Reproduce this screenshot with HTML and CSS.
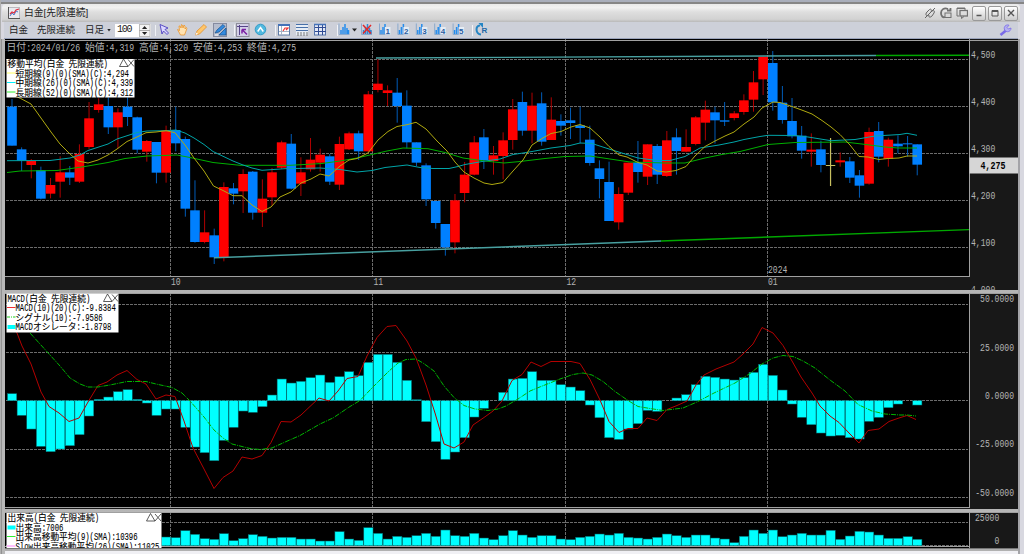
FILE: index.html
```html
<!DOCTYPE html>
<html lang="ja">
<head>
<meta charset="utf-8">
<title>白金[先限連続]</title>
<link rel="stylesheet" href="styles.css">
</head>
<body>
<div class="window">
  <header class="titlebar">
    <svg class="app-icon" width="12" height="12" viewBox="0 0 12 12"><rect x=".5" y=".5" width="11" height="11" fill="#e9e9ee" stroke="#b9b9bf"/><path d="M.5 0V11.5H12" stroke="#555" fill="none"/><path d="M2 9L4 6L6 8L8 4L10 5" stroke="#4b7fd0" fill="none"/><path d="M2 7L4 5L6 6L8 3L11 2" stroke="#e03040" fill="none" stroke-width="1.2"/></svg>
    <h1 class="title">白金[先限連続]</h1>
    <div class="window-tools">
      <svg width="12" height="12" viewBox="0 0 12 12" fill="none" stroke="#666"><path d="M1 11L11 1M4.5 8C2 10 1 7 3 5L5 3C7 1 8 3 7 5M5 8C4 10 6 11 8 9L10 6C11 4 10 3 8 4"/></svg>
      <svg width="12" height="12" viewBox="0 0 12 12" fill="none" stroke="#707070"><path d="M8 2C4 0 1 3 1 6C1 9 3 11 5 10M7 3.5H10.500V1" stroke-width="1.8"/><rect x="5" y="6" width="6" height="4.500"/></svg>
      <svg width="12" height="12" viewBox="0 0 12 12" fill="none" stroke="#707070"><path d="M3 9H1V1H9V3M1 1.500H9"/><rect x="4" y="3.500" width="7.500" height="5.500" stroke-width="1.300"/><path d="M5.500 9.500V11.500L8 9.500"/></svg>
    </div>
    <div class="window-buttons">
      <button class="win-btn"><svg width="12" height="12"><path d="M3.500 8.500H8.500" stroke="#555" stroke-width="1.500"/></svg></button>
      <button class="win-btn"><svg width="12" height="12"><path d="M3 3.500H9V9H3Z M3 4.500H9" stroke="#555" fill="none"/></svg></button>
      <button class="win-btn"><svg width="12" height="12"><path d="M3 3L9 9M9 3L3 9" stroke="#555" stroke-width="1.400"/></svg></button>
    </div>
  </header>
  <nav class="toolbar">
    <span class="label name">白金</span><span class="label series">先限連続</span><span class="label period">日足</span><i class="caret"></i>
    <span class="count"><b>100</b><svg width="12" height="13" viewBox="0 0 12 13"><rect x=".5" y=".5" width="10.500" height="12" fill="#f2f2f2" stroke="#bbb"/><path d="M0 6.500H11" stroke="#aaa"/><path d="M3 5L5.600 2L8.200 5ZM3 8L5.600 11L8.200 8Z" fill="#222"/></svg></span>
    <i class="divider"></i>
    <div class="tools" id="tools"></div>
    <svg class="wrench" width="13" height="13" viewBox="0 0 13 13"><path d="M1.500 11L7 6.500" stroke="#7a6be8" stroke-width="2.600"/><path d="M10 1.200A3.400 3.400 0 1 0 12 4L9.500 5L8 3.500Z" fill="#b5b0f2" stroke="#7a6be8" stroke-width=".8"/></svg>
  </nav>
  <main class="panels">
    <section class="panel price">
      <svg class="plot" id="price" width="1013" height="251" viewBox="5 39 1013 251"></svg>
    </section>
    <section class="panel macd">
      <svg class="plot" id="macd" width="1013" height="216" viewBox="5 293 1013 216"></svg>
    </section>
    <section class="panel volume">
      <svg class="plot" id="volume" width="1013" height="36" viewBox="5 512 1013 36"></svg>
    </section>
  </main>
</div>
<script src="chart.js"></script>
</body>
</html>
```
FILE: styles.css
```css
* { box-sizing: border-box; }
body {
  margin: 0;
  width: 1024px;
  height: 554px;
  overflow: hidden;
  background: #d8d8e0;
  font-family: "Liberation Sans", "Noto Sans CJK JP", sans-serif;
}
.window {
  display: flex;
  flex-direction: column;
  width: 1024px;
  height: 554px;
  padding-top: 2px;
  border-left: 1px solid #b0b0b0;
  background: linear-gradient(#a9aebb 0 2px, #868686 2px 4px, transparent 4px);
}
.titlebar {
  display: flex;
  align-items: center;
  flex: none;
  height: 18px;
  margin: 2px 4px 0 1px;
  padding: 0 2px 0 6px;
  border-radius: 4px 4px 0 0;
  background: linear-gradient(#e9e9e9, #f1f1f1 20%, #dedede 45%, #d2d2d2 85%, #b9b9b9);
}
.app-icon { flex: none; }
.title {
  margin: 0 0 0 4px;
  color: #222;
  font-size: 9.8px;
  font-weight: 400;
  line-height: 16px;
}
.window-tools { display: flex; gap: 4px; margin: 0 4px 0 auto; }
.window-buttons { display: flex; gap: 2px; }
.win-btn {
  width: 14px;
  height: 15px;
  padding: 0;
  border: 1px solid #999;
  border-radius: 2px;
  background: linear-gradient(#fff, #ccc);
}
.win-btn svg { display: block; }
.toolbar {
  display: flex;
  align-items: center;
  flex: none;
  height: 17px;
  margin: 0 6px 0 3px;
  padding-left: 5px;
  background: #cdd0d9;
  border-bottom: 1px solid #9aa3bb;
}
.label { color: #222; font-size: 9.5px; line-height: 16px; white-space: nowrap; }
.name { width: 28px; }
.series { width: 48px; }
.period { width: 22px; }
.caret {
  width: 4px;
  height: 3px;
  background: #222;
  clip-path: polygon(0 0, 100% 0, 50% 100%);
}
.count {
  display: flex;
  width: 36px;
  height: 13px;
  margin-left: 4px;
  background: #fff;
  color: #222;
}
.count b {
  width: 24px;
  padding-left: 2px;
  font: 10px/12px "Liberation Mono", monospace;
  letter-spacing: -1.2px;
}
.divider { width: 1px; height: 11px; margin-left: 4px; background: #eef0f5; }
.tools { height: 16px; }
.tools svg { display: block; }
.wrench { margin: 0 6px 0 auto; }
.panels {
  display: flex;
  flex: none;
  flex-direction: column;
  box-sizing: content-box;
  width: 1013px;
  height: 515px;
  padding-left: 4px;
  border-right: 2px solid #a4a4a8;
  background: linear-gradient(90deg, #929292 0 1px, #b8b8b8 1px 4px, #181818 4px);
}
.plot { display: block; }
.panel { flex: none; }
.price { height: 251px; }
.macd { height: 219px; }
.volume {
  height: 45px;
  background: linear-gradient(transparent 36px, #777 36px 37px, #b0b0b0 37px 39px, #f0f0f4 39px);
}
.macd, .volume {
  border: 0 solid;
  border-top-width: 3px;
  border-image: linear-gradient(#b4b4b4, #fff 50%, #aaa) 1;
}
.grid { stroke: #6c6c6c; stroke-dasharray: 3 1; shape-rendering: crispEdges; }
.axis-bg { fill: #181818; }
.frame { stroke: #a0a0a0; fill: none; shape-rendering: crispEdges; }
.up { fill: #f00; stroke: none; }
.down { fill: #0080ff; stroke: none; }
.wick-up { stroke: #b00000; }
.wick-down { stroke: #005cb8; }
.curve { fill: none; stroke-width: 1; stroke-linejoin: round; }
.short { stroke: #b0aa10; }
.mid { stroke: #00a5a8; }
.long { stroke: #00b000; }
.teal { stroke: #48a0a0; stroke-width: 1.4; }
.green { stroke: #00a800; stroke-width: 1.4; }
.macd-line { stroke: #b40000; }
.signal { stroke: #00b400; stroke-dasharray: 5 1 1 1; }
.bar { fill: #0ff; stroke: #006c70; stroke-width: .5; }
.mono {
  font-family: "Liberation Mono", "Noto Sans CJK JP", monospace;
  fill: #b4b4b4;
}
.legend-text { fill: #000; stroke: #000; stroke-width: .1; }
.last { fill: #000; font-weight: 700; }
```
FILE: chart.js
```js
const NS = 'http://www.w3.org/2000/svg';
const STEP = 9.63;
const centre = i => 12 + i * STEP;

function add(parent, tag, attrs, text) {
  const el = document.createElementNS(NS, tag);
  for (const k in attrs) el.setAttribute(k, attrs[k]);
  if (text !== undefined) el.textContent = text;
  parent.appendChild(el);
  return el;
}

// Text on a fixed cell grid: kana and kanji take two cells, Latin takes one.
function cells(svg, x, y, str, cell, cls = '') {
  const t = add(svg, 'text', { y, class: 'mono ' + cls });
  let cx = x;
  for (const run of str.match(/[\x21-\x7e]+|[^\x21-\x7e ]+| +/g)) {
    const wide = run.charCodeAt(0) > 127;
    const w = run.length * cell * (wide ? 2 : 1);
    if (run[0] !== ' ') {
      add(t, 'tspan', { x: cx, textLength: w, lengthAdjust: 'spacingAndGlyphs', 'font-size': wide ? cell * 2 : cell * 2.35 }, run);
    }
    cx += w;
  }
}

const line = (svg, x1, y1, x2, y2, cls) => add(svg, 'line', { x1, y1, x2, y2, class: cls });
const curve = (svg, points, cls) => add(svg, 'polyline', { points, class: 'curve ' + cls });
const rect = (svg, x, y, width, height, attrs) => add(svg, 'rect', { x, y, width, height, ...attrs });

function background(svg, top, bottom, rows) {
  rect(svg, 5, top, 964, bottom - top, { fill: '#000' });
  rows.forEach(y => line(svg, 6, y, 968, y, 'grid'));
  [170.5, 372.5, 565.5, 767.5].forEach(x => line(svg, x, top, x, bottom, 'grid'));
}

function axis(svg, top, bottom) {
  rect(svg, 969, top - 2, 49, bottom - top + 4, { class: 'axis-bg' });
  line(svg, 969.5, top, 969.5, bottom, 'frame');
}

function legend(svg, x, y, w, h, title, titleY, rows) {
  rect(svg, x, y, w, h, { fill: '#fff' });
  cells(svg, x + 1, titleY, title, 4.36, 'legend-text');
  const r = x + w;
  add(svg, 'path', { d: `M${r - 15} ${titleY}L${r - 11} ${titleY - 7.5}L${r - 6.500} ${titleY}ZM${r - 6.500} ${titleY - 7}L${r - .5} ${titleY}M${r - .5} ${titleY - 7}L${r - 6.500} ${titleY}`, fill: 'none', stroke: '#333', 'stroke-width': .8 });
  rows.forEach(([kind, colour, text, base]) => {
    if (kind === 'bar') rect(svg, x + 1, base - 5, 8, 4, { fill: colour });
    else add(svg, 'line', { x1: x + .5, x2: x + 9, y1: base - 3.500, y2: base - 3.500, stroke: colour, 'stroke-dasharray': kind === 'dash' ? '3 1 1 1' : 'none' });
    cells(svg, x + 9, base, text, 4.36, 'legend-text');
  });
}

/* Price. Each row: direction, body top, body bottom, high, low (thirds of a pixel). */
const candleGroups = [
  [90, 0, `B 50 167 27 167;B 178 212 172 243;R 213 225 207 265;B 240 326 230 328;R 285 311 264 325;R 247 275 199 323;B 247 263 228 285;R 192 275 163 279;R 85 171 36 178;R 43 60 25 68;B 48 112 22 132;R 67 112 55 175;B 50 81 22 108;B 82 179 80 190;R 153 185 150 215;B 156 248 156 280;R 122 248 107 278;B 120 160 50 184;B 147 356 140 380;B 361 456 271 458;R 427 456 361 460;B 436 502 416 522;R 291 501 277 514;B 295 311 279 343;R 252 304 238 369;B 245 368 243 389`],
  [50, 26, `R 446 488 388 531;R 367 442 354 467;R 277 353 272 357;B 281 416 252 418;R 367 401 322 438;R 329 358 264 365;R 314 338 296 365;B 319 395 312 405;R 282 404 260 420;R 250 298 245 300;B 250 304 242 330;R 133 304 123 306;R 101 120 28 127;R 121 129 106 168;B 128 168 84 218;B 167 277 121 295;B 277 338 277 348;B 346 448 340 468;B 453 519 453 536;B 522 592 522 617;R 451 577 432 610;R 374 429 336 457;R 277 374 258 376;B 262 330 237 357;R 316 333 288 374;R 271 318 247 388;R 178 270 147 299;B 156 242 125 257;R 167 242 128 280;B 160 275 127 287;R 209 270 142 270;B 213 227 193 257;B 211 219 173 267;B 226 234 170 280;B 269 339 227 347;B 355 387 331 445;B 396 513 335 513;R 432 517 412 539;R 338 428 338 435;B 337 366 273 398;R 283 380 283 405;B 288 374 282 402;R 271 378 243 381;B 262 303 235 374;R 291 305 238 307;R 202 282 198 286;R 179 218 152 271;B 187 211 170 281;B 211 215 156 228;R 190 204 183 211;R 151 186 133 194;R 97 149 63 185;R 20 88 20 135;B 39 157 3 182;B 158 210 108 221`],
  [0, 81, `B 363 409 294 415;B 407 452 378 476;R 449 455 400 500;B 448 495 422 517;Y 495 498 414 558;R 481 487 457 500;B 484 533 471 549;B 526 557 510 593;R 396 551 383 554;B 393 470 366 487;R 419 477 413 500;B 431 439 406 460;B 430 433 408 470;B 433 494 433 526`]
];

const price = document.getElementById('price');
background(price, 39, 276, [59.500, 106.500, 153.500, 200.500, 247.500]);
for (const [offset, first, data] of candleGroups) {
  data.split(';').forEach((row, n) => {
    const [dir, ...v] = row.split(' ');
    const [top, bottom, high, low] = v.map(p => offset + p / 3);
    const x = centre(first + n);
    if (dir === 'Y') {
      add(price, 'path', { d: `M${x} ${high}V${low}M${x - 4.700} ${top + .5}H${x + 4.700}`, stroke: '#c8c060', 'stroke-width': 1.2 });
      return;
    }
    line(price, x, high, x, low, dir === 'R' ? 'wick-up' : 'wick-down');
    rect(price, x - 4.800, top, 9.600, Math.max(1, bottom - top), { class: dir === 'R' ? 'up' : 'down' });
  });
}
curve(price, '7,172.5 20,171 57,170.5 85,166.5 108,162.5 125,158.5 147,156 177,155 190,157.5 213,162.5 240,165.3 290,165.3 322,163.5 340,161 357,158 372,154.5 387,151 403,148 428,148.7 445,152.5 463,158 485,161 504,163 520,161.5 545,158.5 565,156.5 590,156 610,159 630,162 665,163 685,163 705,158 722,154.5 740,151.5 752,148.5 768,144.5 795,142.5 845,142 866,144.5 885,147 898,148 917,148', 'long');
curve(price, '7,160.7 50,160.5 70,158 80,155 88,150.5 108,144 117,139 137,132.5 147,131 166,130.7 176,130 185,133 194,138 204,144.5 213,151.5 233,161 243,165 252,168 262,170.3 285,168.7 320,168 340,169.5 357,172 372,170.5 385,167.5 407,165 420,167.5 433,168.5 449,168.5 458,166.5 465,164.5 485,161 500,159 513,154.5 523,153 532,151.5 551,148 570,145.5 580,143 592,143.5 609,149 638,158 657,160.5 670,160.5 685,156.5 700,148 719,145 734,142 744,139.5 760,136.5 768,135.3 795,135.5 808,137 831,140.7 855,139.5 875,136 900,134.5 907,133.3 917,135.3', 'mid');
curve(price, '15,96 20.7,98.5 31,104 41,118 51,132 60,144 70,154 78,161 88,163 98,160 108,155 117,149 127,141.5 137,137 146,132.7 156,132 166,130.7 175,132.7 185,145 194,158 204,171 213.5,186 223,190.5 233,195.7 242,195.7 252,205 262,211.5 271,207 280,197 291,192 301,183 311,179 320,174 329,176 340,166 349,160 357,158.5 368,153 378,140 388,131.5 397,126.5 407,124.7 416,122.3 426,129 437,141 447,151 455,162 464,172 474,178 484,183 492,184.5 503,182.5 513,171 523,160 532,145 542,138.5 551,133.5 561,131.5 571,127 580,124.5 590,128 600,137 609,146.5 619,155 627,157 638,162.5 647,165 657,171 666,172 676,170.5 686,166.5 695,156 705,146.5 715,141 725,136 734,132 744,124 754,117 762,108 773,102 780,102.5 792,106.5 803,110.5 812,114 822,120.5 831,127 840,134.5 850,145 859,156.5 868,157 879,159.5 888,158.5 899,158 907,156 917,156', 'short');
curve(price, '376,58 876,55.5', 'teal');
curve(price, '876,55.5 969,55.3', 'green');
curve(price, '214,257.8 661,241', 'teal');
curve(price, '661,241 969,229.6', 'green');

rect(price, 5, 277, 1013, 13, { class: 'axis-bg' });
axis(price, 39, 277);
line(price, 5, 276.500, 970, 276.500, 'frame');
line(price, 5, 40.500, 1018, 40.500, 'frame');
[[171, '10'], [373.500, '11'], [566.500, '12'], [768, '01']].forEach(([x, s]) => cells(price, x, 285, s, 4.85));
cells(price, 768, 272.500, '2024', 4.85);
[['4,500', 57.500], ['4,400', 104.500], ['4,300', 151.500], ['4,200', 198.500], ['4,100', 245.500], ['4,000', 293]].forEach(([s, y]) => cells(price, 971, y, s, 4.85));
rect(price, 969.500, 157.500, 48.500, 16, { fill: '#d6d6d6' });
cells(price, 980.500, 168.500, '4,275', 5, 'last');
cells(price, 6.500, 50.500, '日付:2024/01/26 始値:4,319 高値:4,320 安値:4,253 終値:4,275', 4.91);
legend(price, 6.500, 59, 128, 38.500, '移動平均(白金 先限連続)', 66.500, [
  ['line', '#ffff60', '短期線(9)(0)(SMA)(C):4,294', 76.500],
  ['line', '#00f0ff', '中期線(26)(0)(SMA)(C):4,339', 86],
  ['line', '#30f030', '長期線(52)(0)(SMA)(C):4,312', 95.500]
]);

/* MACD histogram heights, thirds of a pixel. */
const histogram = [21, -44, -85, -137, -153, -145, -135, -102, -46, 4, 11, 27, 33, 4, -7, -44, -25, -25, -80, -139, -156, -180, -119, -80, -31, -35, -18, 17, 65, 53, 58, 69, 77, 55, 72, 87, 75, 115, 139, 139, 115, 61, 3, -63, -123, -176, -154, -111, -49, -23, 0, 25, 65, 67, 87, 61, 61, 48, 41, 30, -13, -51, -111, -116, -85, -69, -29, -32, 0, 8, 18, 48, 73, 70, 65, 62, 69, 85, 109, 76, 32, -10, -50, -72, -97, -106, -104, -111, -115, -62, -50, -21, -10, 0, -13];
const macd = document.getElementById('macd');
background(macd, 293, 508, [304.500, 352.500, 400.500, 449.500, 497.500]);
histogram.forEach((v, i) => {
  if (v) rect(macd, centre(i) - 4.500, 400.700 - Math.max(v, 0) / 3, 9.200, Math.abs(v) / 3, { class: 'bar' });
});
curve(macd, '11,325 17,333 22,346 31,364 41,392 49,406.5 59,413 69,421.5 79,418 88,402 98,385.5 107,382 117,375 127,370.5 137,379.5 146,384 156,399 166,395 175,396.5 184,421 193,448 204,469 214,488.5 223,477.5 233,471 242,457 252,459 262,455.5 271,442.5 281,421.5 291,422 301,415 311,405.5 319,398 329,401 338,391 347,378.5 358,376.5 367,356 377,337.5 387,326.5 396,325.5 407,341 416,358 426,385 435,413 444,444 454,448 464,442 473,425 484,417.5 493,411 502,401 512,380.5 522,374.5 531,362 541,366.5 551,361.5 571,361.5 580,363.5 590,379.5 600,400 609,421.5 619,432.5 628,428.5 638,428.5 647,418 657,420.5 667,409.5 677,405.5 687,401 696,385 704,375 716,369 734,362 743,354 753,344 762,327.5 773,333 783,345.5 792,361 801,377 812,393 820,406 830,416 839,422.5 849,433 859,443 868,430.5 879,429 889,421.5 899,418 907,415.5 916,419.5', 'macd-line');
curve(macd, '30,333 50,355 60,366 70,378 80,384 88,387 98,387 110,385 127,381.5 146,381.5 156,384 172,387.5 182,393 190,401 204,417 214,430 223,438 232,444 250,448.5 260,449.5 272,448 284,442.5 300,435.5 320,424 333,418 350,406.5 360,400.5 372,388 388,372 398,363 406,359.5 416,359 423,363 434,371 444,386 454,397.5 464,405.5 475,409 488,410.5 498,409 506,406 518,399 530,391 541,386.5 560,379 573,374.5 583,373 592,375 603,381.5 615,391.5 628,400.5 638,406.5 650,408.5 663,410.5 683,408 697,402 714,393 735,383 750,373.5 762,364 773,358 783,355.5 793,356.5 803,361 815,368 830,380 845,391 858,404.5 872,411 885,414 900,415 907,415 916,416', 'signal');
axis(macd, 293, 508);
line(macd, 5, 293.500, 1018, 293.500, 'frame');
line(macd, 5, 507.500, 970, 507.500, 'frame');
[['50.0000', 302], ['25.0000', 350.500], ['0.0000', 399], ['-25.0000', 447], ['-50.0000', 495.500]].forEach(([s, y]) => cells(macd, 1014 - s.length * 4.85, y, s, 4.85));
legend(macd, 6.500, 293.500, 112, 39, 'MACD(白金 先限連続)', 301.500, [
  ['line', '#f03030', 'MACD(10)(20)(C):-9.8384', 311],
  ['dash', '#20d020', 'シグナル(10):-7.9586', 320.500],
  ['bar', '#00ffff', 'MACDオシレータ:-1.8798', 330]
]);

/* Volume bar heights, thirds of a pixel; the first bars are under the legend. */
const volumes = [26, 24, 45, 34, 21, 19, 36, 15, 21, 33, 28, 23, 25, 25, 20, 20, 14, 14, 42, 20, 16, 54, 37, 20, 28, 25, 30, 37, 28, 47, 30, 28, 37, 23, 18, 30, 45, 32, 25, 30, 30, 20, 18, 25, 28, 35, 32, 37, 25, 23, 20, 25, 35, 30, 25, 32, 32, 23, 20, 9, 28, 47, 37, 47, 27, 32, 37, 32, 32, 46, 19, 29, 43, 41, 32, 22, 22, 27, 19];
const volume = document.getElementById('volume');
background(volume, 512, 548, [522.500, 545.500]);
volumes.forEach((v, i) => rect(volume, centre(i + 16) - 4.500, 545.700 - v / 3, 9.200, v / 3, { class: 'bar' }));
axis(volume, 512, 548);
line(volume, 5, 512.500, 1018, 512.500, 'frame');
line(volume, 5, 546.500, 970, 546.500, 'frame');
cells(volume, 975, 521, '25000', 4.85);
cells(volume, 994.500, 543.500, '0', 4.85);
legend(volume, 6.500, 513, 155, 36, '出来高(白金 先限連続)', 521, [
  ['bar', '#00ffff', '出来高:7006', 530.500],
  ['line', '#30f030', '出来高移動平均(9)(SMA):10396', 540],
  ['line', '#ff80ff', 'Slow出来高移動平均(26)(SMA):11025', 549.500]
]);

/* Toolbar icons, laid out on one strip that starts at x = 156. */
const strip = add(document.getElementById('tools'), 'svg', { width: 340, height: 16, viewBox: '156 23 340 16' });
const icon = markup => { add(strip, 'g', {}).innerHTML = markup; };
icon('<path d="M160 25.500L168 29L165 30.500L168.500 34L167 35.500L163.500 32L162 35Z" fill="#dcd8ff" stroke="#4c3fc0" stroke-width=".9"/>');
icon('<path d="M177.500 30.500L179.500 31.500L179 27Q180 26 181 29L181.500 25.500Q182.500 25 183 29L184 26Q185.500 26 185 30L186.500 28.500Q187.500 29 186 32L184.500 36H180.500Z" fill="#ffe2b0" stroke="#e8962e" stroke-width=".8"/>');
icon('<path d="M195.500 36L197 32L204 25.500L206.500 28L199.500 35Z" fill="#ffc66a" stroke="#e09030" stroke-width=".8"/><path d="M195.500 36L196.500 33.500L198 35Z" fill="#fff"/>');
icon('<rect x="213.500" y="24.500" width="13" height="13" fill="#b5bccd" stroke="#858ba0"/><path d="M215 34L217 31L223 25.500L225 27.500L219 33ZM219 36L226 29V36Z" fill="#338be0" stroke="#14508e" stroke-width=".7"/><path d="M215 36H218" stroke="#fff"/>');
icon('<path d="M234.500 25.500V37" stroke="#f2f3f7"/><rect x="236.500" y="24.500" width="12.500" height="13" fill="#d4d0e8" stroke="#8e8e9c"/><path d="M239.500 26V36M237 27.500H248" stroke="#554488"/><path d="M242 30.500H246M242 30.500V34.500M242 30.500L247 35.500" stroke="#7c22a4" stroke-width="1.500"/>');
icon('<circle cx="260.500" cy="30.500" r="5.300" fill="#52b9df" stroke="#329bc8"/><path d="M257.700 32.500L260.500 28.500L263.300 32.500" stroke="#fff" fill="none" stroke-width="1.500"/>');
icon('<path d="M275.500 26V37" stroke="#f2f3f7"/><rect x="278.500" y="25.500" width="11" height="10.500" fill="#fff" stroke="#5e7ba6"/><path d="M278 26H290" stroke="#4472b8" stroke-width="2"/><path d="M281.500 27V36M279 32.500H289" stroke="#a6b5c8"/><path d="M283 32L285 29H288M286 31L288.500 28.500" stroke="#e33" stroke-width="1.200" fill="none"/>');
icon('<rect x="296" y="25" width="12" height="11" fill="#e7edf5"/><path d="M296 25.500H308M296 28.500H308M296 31.500H308" stroke="#4870a8"/><path d="M297 34H308M297 36H308" stroke="#777" stroke-dasharray="2 1"/>');
icon('<rect x="314.500" y="25.500" width="11" height="10.500" fill="#e4e9f5" stroke="#5574ac"/><path d="M318.500 25V36M322.500 25V36M315 28.500H326M315 32.500H326" stroke="#304c94"/><path d="M314 25.500H326" stroke="#4472b8" stroke-width="1.500"/>');
const chartBars = (x, colour) => `<path d="M${x + .5} 24.500V35.500H${x + 11}" stroke="#8ba9cc" fill="none"/><path d="M${x + 2.500} 31V35M${x + 4.500} 28V35M${x + 6.500} 25V35M${x + 8.500} 29V35M${x + 10} 31V35" stroke="${colour}" stroke-width="1.500"/>`;
icon('<path d="M337.500 26V37" stroke="#f2f3f7"/>' + chartBars(338.500, '#258cec') + '<path d="M352 29.500H357L354.500 32.500Z" fill="#222"/>');
icon(chartBars(361, '#3187d3') + '<path d="M363 26L371 34.500M371 26L363 34.500" stroke="#e32828" stroke-width="1.500"/>');
[1, 2, 3, 4, 5].forEach((n, i) => {
  const x = 379 + i * 18.400;
  icon(`<path d="M${x + .5} 24.500V35.500H${x + 11}" stroke="#8ba9cc" fill="none"/><path d="M${x + 2} 31V35M${x + 4} 28V35M${x + 6} 25V35" stroke="#258cec" stroke-width="1.500"/><rect x="${x + 6}" y="28" width="5.500" height="7.500" fill="#e6edf5"/><text x="${x + 6.500}" y="34.500" font-family="Liberation Sans" font-weight="700" font-size="8" fill="#2a5ca0">${n}</text>`);
});
icon('<path d="M472.500 26V37" stroke="#f2f3f7"/><path d="M480 26.500C475 27 475.500 35 481 35.500" fill="none" stroke="#2585c4" stroke-width="2"/><path d="M478.500 24H483V29Z" fill="#2585c4"/><text x="481.500" y="33.500" font-family="Liberation Sans" font-weight="700" font-size="8" fill="#2468a8">R</text>');
```
